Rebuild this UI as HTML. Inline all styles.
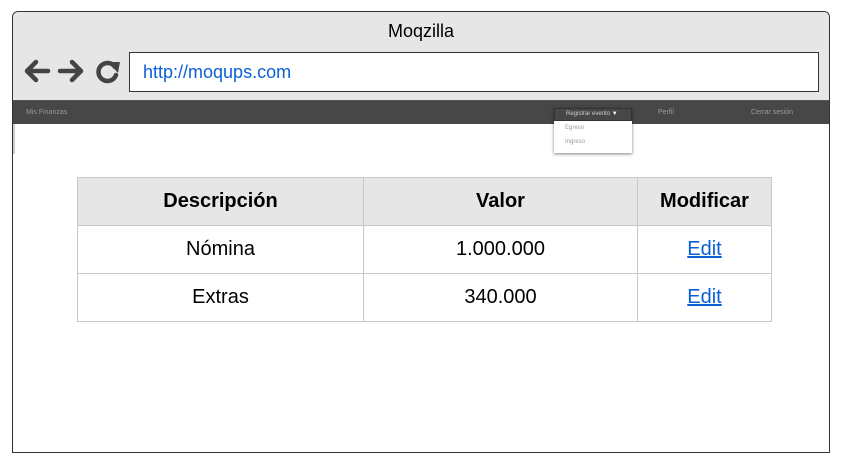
<!DOCTYPE html><html><head><style>
body{margin:0;width:857px;height:470px;background:#fff;font-family:"Liberation Sans",sans-serif;position:relative;overflow:hidden}
.win{position:absolute;left:12px;top:11px;width:816px;height:440px;border:1.5px solid #333;border-radius:6px 6px 0 0;background:#fff;overflow:hidden}
.top{position:absolute;left:0;top:0;width:816px;height:88px;background:#e6e6e6;border-bottom:1.5px solid #555}
.title{position:absolute;top:9px;width:100%;text-align:center;font-size:18px}
.url{position:absolute;left:116px;top:40px;width:690px;height:40px;border:1.5px solid #333;background:#fff;box-sizing:border-box;color:#0a5fd6;font-size:18px;line-height:38px;padding-left:13px}
.nav{position:absolute;left:0;top:89px;width:816px;height:23px;background:#474747;font-size:7px;color:#999}
.nav span{position:absolute;top:8px}
.dd{position:absolute;left:541px;top:96px;width:78px;height:45px;background:#fff;box-shadow:0 1px 3px rgba(0,0,0,.5);font-size:6px;color:#999}
table{position:absolute;left:64px;top:165px;border-collapse:collapse;font-size:20px}
td,th{border:1.5px solid #c8c8c8;text-align:center;height:47px;padding:0}
th{background:#e6e6e6;font-weight:bold}
a{color:#0a5fd6;text-decoration:underline}
</style></head><body>
<div class="win">
<div class="top"><div class="title">Moqzilla</div>
<svg style="position:absolute;left:10px;top:46px" width="100" height="26" viewBox="0 0 100 26">
<g fill="none" stroke="#444" stroke-width="4.5" stroke-linecap="round" stroke-linejoin="round">
<path d="M25 13H4M13 4L4 13L13 22"/><path d="M37 13H58M49 4L58 13L49 22"/>
<path d="M92 9A9 9 0 1 0 93 17"/></g><path d="M85 4L97 4L95 15Z" fill="#444"/></svg>
<div class="url">http://moqups.com</div></div>
<div class="nav"><span style="left:13px">Mis Finanzas</span><span style="left:645px">Perfil</span><span style="left:738px">Cerrar sesión</span></div>
<div style="position:absolute;left:0;top:112px;width:2px;height:30px;background:#ccc"></div>
<div class="dd"><div style="background:#474747;height:13px;color:#ccc;padding:2px 0 0 11px;border:1px solid #333;box-sizing:border-box">Registrar evento <span style="color:#fff">▼</span></div>
<div style="padding:4px 0 0 11px">Egreso</div><div style="padding:8px 0 0 11px">Ingreso</div></div>
<table><tr><th style="width:285px">Descripción</th><th style="width:273px">Valor</th><th style="width:133px">Modificar</th></tr>
<tr><td>Nómina</td><td>1.000.000</td><td><a>Edit</a></td></tr>
<tr><td>Extras</td><td>340.000</td><td><a>Edit</a></td></tr></table>
</div>
</body></html>
